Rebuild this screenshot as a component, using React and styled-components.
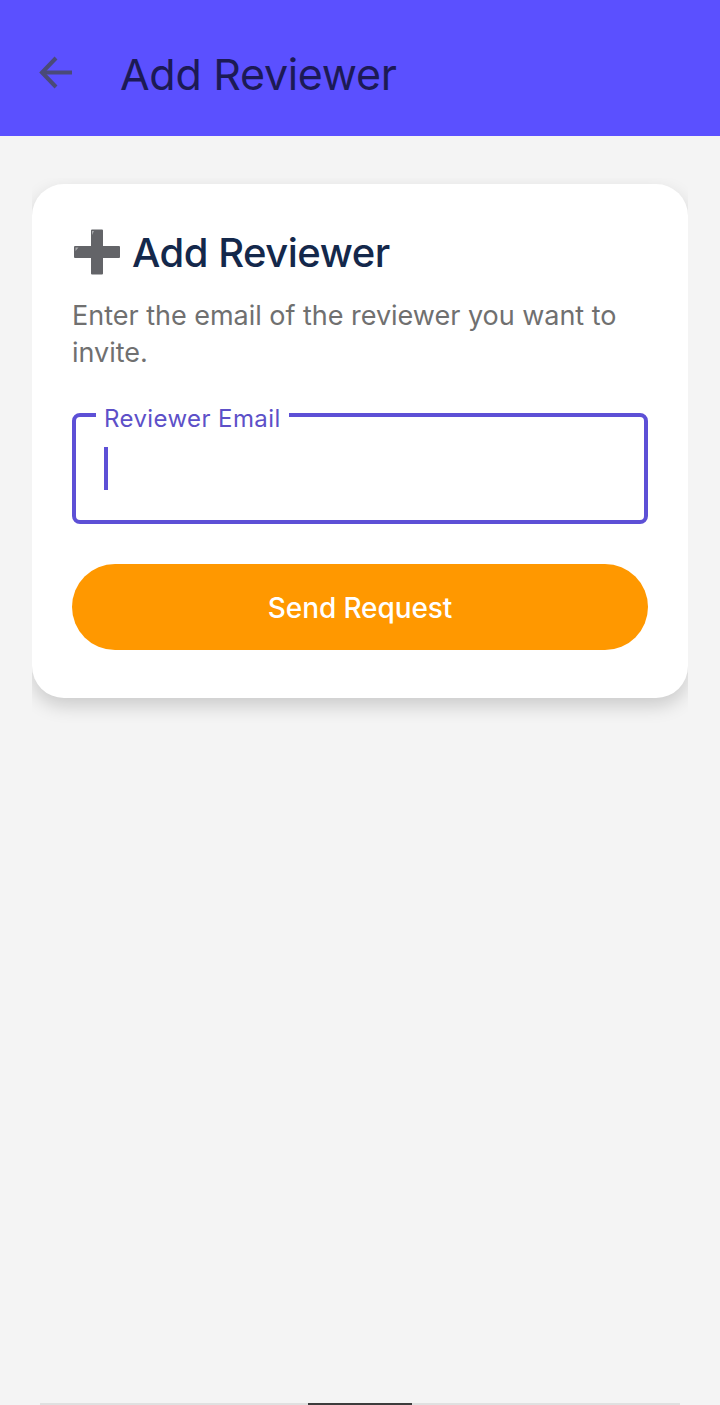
import React from "react";
import styled, { createGlobalStyle } from "styled-components";

const Global = createGlobalStyle`
html, body {
  margin: 0;
  padding: 0;
  background: #f4f4f4;
}
* { box-sizing: border-box; }
`;

const Page = styled.div`
  position: relative;
  width: 720px;
  height: 1405px;
  overflow: hidden;
  background: #f4f4f4;
  font-family: Inter, "Noto Sans", sans-serif;
`;

const Header = styled.header`
  display: flex;
  align-items: center;
  height: 136px;
  padding: 8px 0 0 38px;
  gap: 45px;
  background: #5b50ff;
`;

const BackButton = styled.div`
  display: flex;
  width: 37px;
  height: 37px;
  color: #4a4a78;
`;

const HeaderTitle = styled.h1`
  margin: 0;
  padding-top: 4px;
  font-size: 43px;
  font-weight: 400;
  letter-spacing: -0.3px;
  color: #1c1a55;
`;

const Content = styled.main`
  padding: 48px 32px;
`;

const Card = styled.section`
  height: 514px;
  padding: 40px;
  border-radius: 32px;
  background: #fff;
  box-shadow: 0 8px 18px rgba(0, 0, 0, 0.17);
  clip-path: inset(-6px 0 -30px 0);
`;

const CardTitle = styled.h2`
  display: flex;
  align-items: center;
  gap: 12px;
  height: 56px;
  margin: 0 0 0 2px;
  font-size: 40px;
  font-weight: 500;
  letter-spacing: -0.5px;
  color: #14284b;
`;

const Description = styled.p`
  margin: 17px 0 0;
  font-size: 27px;
  line-height: 37px;
  letter-spacing: -0.02px;
  color: #707070;
`;

const Field = styled.fieldset`
  height: 127px;
  margin: 26px 0 0;
  padding: 0 28px;
  border: 4px solid #5d50d6;
  border-radius: 8px;
`;

const FieldLabel = styled.legend`
  margin-left: -8px;
  padding: 8px 8px 0;
  font-size: 24px;
  line-height: 28px;
  letter-spacing: 0.4px;
  color: #5d50c8;
`;

const Caret = styled.div`
  width: 4px;
  height: 43px;
  margin-top: 14px;
  background: #5d50d6;
`;

const SendButton = styled.button`
  display: block;
  width: 100%;
  height: 86px;
  margin-top: 40px;
  padding: 2px 0 0;
  border: none;
  border-radius: 43px;
  background: #ff9800;
  color: #fff;
  font-family: inherit;
  font-size: 28px;
  font-weight: 500;
  letter-spacing: -0.1px;
`;

const NavLine = styled.div`
  position: absolute;
  left: 40px;
  right: 40px;
  bottom: 0;
  height: 2px;
  background: #e0e0e0;
`;

const NavHandle = styled.div`
  position: absolute;
  left: 268px;
  bottom: 0;
  width: 104px;
  height: 2px;
  background: #3c3c3c;
`;

const ArrowIcon = () => (
  <svg viewBox="0 0 37 37" width="37" height="37" fill="none" stroke="currentColor" strokeWidth="4">
    <path d="M34 18.5H5" />
    <path d="M18 4L4 18.5L18 33" />
  </svg>
);

// heavy plus emoji
const PlusIcon = () => (
  <svg viewBox="0 0 46 46" width="46" height="46">
    <path
      d="M17 1.5a1 1 0 0 1 1-1h10a1 1 0 0 1 1 1V17h16a1 1 0 0 1 1 1v10a1 1 0 0 1-1 1H29v15.5a1 1 0 0 1-1 1H18a1 1 0 0 1-1-1V29H1a1 1 0 0 1-1-1V18a1 1 0 0 1 1-1h16z"
      fill="#636468"
    />
    <path d="M18 6V2h2zM1.500 22v-3.500h3z" fill="#a9aaad" />
  </svg>
);

const App = () => {
  return (
    <Page>
      <Global />
      <Header>
        <BackButton>
          <ArrowIcon />
        </BackButton>
        <HeaderTitle>Add Reviewer</HeaderTitle>
      </Header>
      <Content>
        <Card>
          <CardTitle>
            <PlusIcon />
            Add Reviewer
          </CardTitle>
          <Description>Enter the email of the reviewer you want to invite.</Description>
          <Field>
            <FieldLabel>Reviewer Email</FieldLabel>
            <Caret />
          </Field>
          <SendButton>Send Request</SendButton>
        </Card>
      </Content>
      <NavLine>
        <NavHandle />
      </NavLine>
    </Page>
  );
};

export default App;
